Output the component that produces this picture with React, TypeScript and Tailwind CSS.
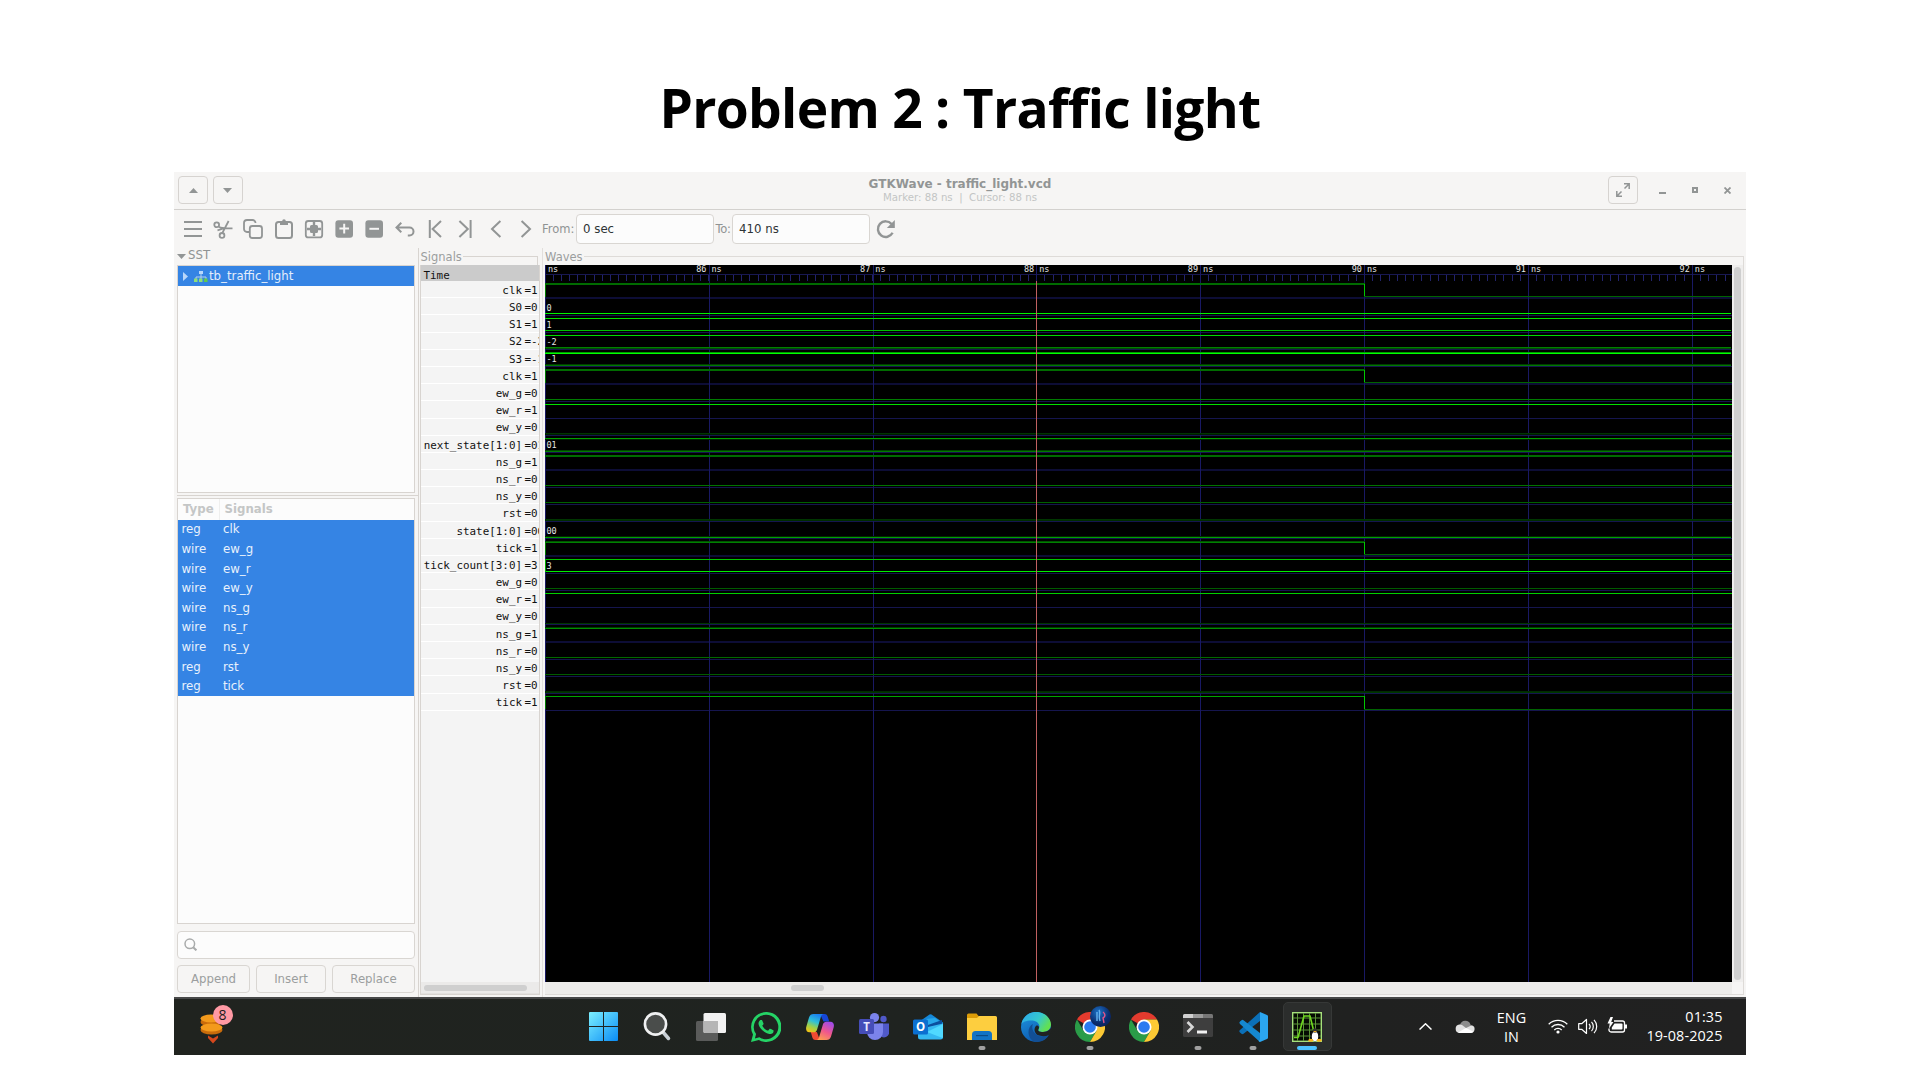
import React from "react";

const GREY = "#929595";

type Row = {
  name: string;
  value: string;
  bus?: string;
  lines: [number, string][];
  blue: number[];
  fall?: [number, number];
};

// Line positions are rows of pixels counted from the top of the window's screen area.
const rows: Row[] = [
  { name: "clk", value: "1", lines: [[283, "#006b00"], [284, "#006b00"]], blue: [297, 298], fall: [284, 296] },
  { name: "S0", value: "0", bus: "0", lines: [[313, "#00f000"]], blue: [315] },
  { name: "S1", value: "1", bus: "1", lines: [[318, "#00e000"], [330, "#00c400"]], blue: [332] },
  { name: "S2", value: "-2", bus: "-2", lines: [[335, "#00dc00"], [347, "#008000"], [348, "#004c00"]], blue: [349] },
  { name: "S3", value: "-1", bus: "-1", lines: [[352, "#009c00"], [353, "#00ff00"], [364, "#003c00"], [365, "#007800"]], blue: [366] },
  { name: "clk", value: "1", lines: [[369, "#006b00"], [370, "#006b00"]], blue: [383, 384], fall: [370, 382] },
  { name: "ew_g", value: "0", lines: [[399, "#007c00"]], blue: [401] },
  { name: "ew_r", value: "1", lines: [[404, "#00e000"]], blue: [418] },
  { name: "ew_y", value: "0", lines: [[433, "#003600"], [434, "#001c00"]], blue: [435] },
  { name: "next_state[1:0]", value: "01", bus: "01", lines: [[438, "#00a000"], [439, "#002000"], [450, "#004400"], [451, "#007c00"]], blue: [452] },
  { name: "ns_g", value: "1", lines: [[455, "#006b00"], [456, "#006b00"]], blue: [469, 470] },
  { name: "ns_r", value: "0", lines: [[485, "#007400"]], blue: [487] },
  { name: "ns_y", value: "0", lines: [[502, "#006000"]], blue: [504] },
  { name: "rst", value: "0", lines: [[519, "#003600"], [520, "#002c00"]], blue: [521] },
  { name: "state[1:0]", value: "00", bus: "00", lines: [[536, "#002800"], [537, "#00a000"]], blue: [538] },
  { name: "tick", value: "1", lines: [[541, "#005400"], [542, "#008000"]], blue: [555, 556], fall: [542, 554] },
  { name: "tick_count[3:0]", value: "3", bus: "3", lines: [[559, "#00c400"], [571, "#00ec00"]], blue: [573] },
  { name: "ew_g", value: "0", lines: [[588, "#005a00"]], blue: [590] },
  { name: "ew_r", value: "1", lines: [[593, "#00d000"]], blue: [607] },
  { name: "ew_y", value: "0", lines: [[623, "#003600"]], blue: [624] },
  { name: "ns_g", value: "1", lines: [[627, "#003c00"], [628, "#009000"]], blue: [641, 642] },
  { name: "ns_r", value: "0", lines: [[657, "#006a00"]], blue: [659] },
  { name: "ns_y", value: "0", lines: [[674, "#005a00"]], blue: [676] },
  { name: "rst", value: "0", lines: [[691, "#002c00"], [692, "#003600"]], blue: [693] },
  { name: "tick", value: "1", lines: [[696, "#00a400"]], blue: [710], fall: [696, 709] },
];

const vars: [string, string][] = [
  ["reg", "clk"], ["wire", "ew_g"], ["wire", "ew_r"], ["wire", "ew_y"], ["wire", "ns_g"],
  ["wire", "ns_r"], ["wire", "ns_y"], ["reg", "rst"], ["reg", "tick"],
];

const PITCH = 163.9;

function Waves() {
  const Y0 = 265;
  const edge = 819;
  const ticks = Array.from({ length: 145 }, (_, i) => i);
  return (
    <svg width="1187" height="717" viewBox="0 0 1187 717" className="block bg-black" shapeRendering="crispEdges">
      {rows.map((r, i) => r.blue.map((y) => (
        <rect key={i + "b" + y} x="0" y={y - Y0} width="1187" height="1" fill={r.blue.length > 1 ? "#0d0d36" : "#15154e"} />
      )))}
      <rect x="0" y="9" width="1187" height="1" fill="#181852" />
      {ticks.map((i) => (
        <rect key={i} x={Math.floor((i * PITCH) / 20)} y="10" width="1" height="6" fill="#22226c" />
      ))}
      {[0, 1, 2, 3, 4, 5, 6, 7].map((i) => (
        <rect key={i} x={Math.floor(i * PITCH + 0.2)} y="0" width="1" height="717" fill="#191964" />
      ))}
      {rows.map((r, i) =>
        r.lines.map(([y, c]) => (
          <rect key={i + "l" + y} x="0" y={y - Y0} width={r.fall ? edge + 1 : r.bus ? 1186 : 1187} height="1" fill={c} />
        ))
      )}
      {rows.map((r, i) =>
        r.fall ? (
          <g key={i}>
            <rect x={edge} y={r.fall[0] - Y0} width="1" height={r.fall[1] - r.fall[0] + 1} fill="#00c800" />
            <rect x={edge} y={r.fall[1] - Y0} width={1187 - edge} height="1" fill="#006400" />
            <rect x="0" y={r.fall[0] - Y0} width="1" height="13" fill="#007c00" />
          </g>
        ) : null
      )}
      <rect x="0" y="294" width="1" height="13" fill="#00b000" />
      <rect x="491" y="16" width="1" height="701" fill="#c06060" />
      <g fill="#e6e6e6" fontFamily="'DejaVu Sans Mono', monospace" fontSize="8.5">
        <text x="3" y="7">ns</text>
        {[86, 87, 88, 89, 90, 91, 92].map((n, i) => (
          <g key={n}>
            <text x={(i + 1) * PITCH - 2.5} y="7" textAnchor="end">{n}</text>
            <text x={(i + 1) * PITCH + 2.5} y="7">ns</text>
          </g>
        ))}
        {rows.map((r, i) =>
          r.bus ? <text key={i} x="1.5" y={28.4 + i * 17.2}>{r.bus}</text> : null
        )}
      </g>
    </svg>
  );
}

function Tool({ children, w = 20 }: { children: React.ReactNode; w?: number }) {
  return (
    <div className="flex w-[30.3px] shrink-0 justify-center">
      <svg width={w} height="20" viewBox="0 0 20 20" fill="none" stroke={GREY} strokeWidth="1.8">{children}</svg>
    </div>
  );
}

function HeaderButton({ children }: { children: React.ReactNode }) {
  return (
    <div className="flex h-7 w-[30px] items-center justify-center rounded-[4px] border border-[#d6d3d0]">{children}</div>
  );
}

function Entry({ children }: { children: React.ReactNode }) {
  return (
    <div className="flex h-[30px] w-[137.500px] items-center rounded-[4px] border border-[#d9d6d2] bg-[#fcfcfc] pt-[1px] pl-[6px] text-[11.750px] text-[#2e3436]">{children}</div>
  );
}

function Toolbar() {
  return (
    <div className="flex h-[38px] items-center pl-[3.5px]">
      <Tool><path d="M1 3h18M1 10h18M1 17h18" strokeWidth="2" /></Tool>
      <Tool><circle cx="3.7" cy="5.800" r="2.400" /><circle cx="9" cy="16.400" r="2.400" /><path d="M6 7.800C9 10 14 9.400 19.500 9.300M9.400 13.800 15.600 2M4.500 11.300 12 9" /></Tool>
      <Tool><path d="M6.5 13H4a3 3 0 0 1-3-3V4a3 3 0 0 1 3-3h5.5a3 3 0 0 1 3 3" /><rect x="6.8" y="7" width="12.2" height="12" rx="2.5" /></Tool>
      <Tool><rect x="2" y="3" width="16" height="16" rx="2.5" strokeWidth="2" /><path d="M6 2h2.2a1.8 1.8 0 0 1 3.6 0H14v4H6z" fill={GREY} stroke="none" /></Tool>
      <Tool><rect x="1.800" y="2" width="16.400" height="16.400" rx="2.500" /><path d="M7.500 6h5a1.500 1.500 0 0 1 1.500 1.500v5a1.500 1.500 0 0 1-1.500 1.500h-5A1.500 1.500 0 0 1 6 12.500v-5A1.500 1.500 0 0 1 7.500 6zM8.800 3h2.400v14H8.800zM3 8.800h14v2.400H3z" fill={GREY} stroke="none" /></Tool>
      <Tool><rect x="1.400" y="1.2" width="17.6" height="17.6" rx="3" fill={GREY} stroke="none" /><path d="M10.200 4.8v9.6M5.400 9.6h9.6" stroke="#f6f5f4" strokeWidth="2" /></Tool>
      <Tool><rect x="1.400" y="1.2" width="17.6" height="17.6" rx="3" fill={GREY} stroke="none" /><path d="M5.400 9.8h9.6" stroke="#f6f5f4" strokeWidth="2" /></Tool>
      <Tool><path d="M6.300 3.800 1.500 8.500l4.800 4.700M1.800 8.500h12.700a4 4 0 0 1 4 4a4 4 0 0 1-4 4h-1.700" strokeWidth="2" /></Tool>
      <Tool><path d="M4.8 1v18M16 2 7.6 10 16 18" strokeWidth="2" /></Tool>
      <Tool><path d="M15.6 1v18M4.4 2l8.4 8-8.4 8" strokeWidth="2" /></Tool>
      <Tool><path d="M14.4 2 6 10l8.4 8" strokeWidth="2" /></Tool>
      <Tool><path d="M5.6 2 14 10l-8.4 8" strokeWidth="2" /></Tool>
      <div className="flex items-center text-[11.5px] text-[#8f9393]">
        <span className="mt-[1px] ml-[1px] w-[34px]">From:</span>
        <Entry>0 sec</Entry>
        <span className="mt-[1px] ml-[2px] w-[16.500px] tracking-[-0.3px]">To:</span>
        <Entry>410 ns</Entry>
      </div>
      <svg className="ml-[6.500px]" width="20" height="20" viewBox="0 0 20 20" fill="none" stroke={GREY} strokeWidth="2.4">
        <path d="M16.6 13.8A7.8 7.8 0 1 1 15.6 5" /><path d="M18.8 1v8h-8z" fill={GREY} stroke="none" />
      </svg>
    </div>
  );
}

function Sidebar() {
  return (
    <div className="flex w-[244px] flex-col pl-[3px] text-[11.75px]">
      <div className="flex h-[17px] items-center text-[#8f9393]">
        <svg width="9" height="5" viewBox="0 0 9 5"><path d="M0 0h9L4.5 5z" fill={GREY} /></svg>
        <span className="ml-[2px] -mt-[1px]">SST</span>
      </div>
      <div className="h-[228px] w-[238px] border border-[#d8d4d0] bg-[#fcfcfc]">
        <div className="flex h-5 items-center bg-[#3584e4] pt-[1px] text-[#e4eefb]">
          <svg className="ml-[5px]" width="5" height="9" viewBox="0 0 5 9"><path d="M0 0v9l5-4.500z" fill="#b8d6fa" /></svg>
          <svg className="ml-[6px]" width="14" height="11" viewBox="0 0 14 11">
            <path d="M7 3v3M2 8V6h10v2M7 6v2" stroke="#b4d0f0" fill="none" />
            <rect x="5" y="0" width="4" height="3" fill="#b9d8fb" /><rect x="0" y="7.500" width="3.500" height="3.500" fill="#8de07a" /><rect x="5" y="7.500" width="3.500" height="3.500" fill="#8de07a" /><rect x="10" y="7.500" width="3.500" height="3.500" fill="#5fc94f" />
          </svg>
          <span className="ml-[1px]">tb_traffic_light</span>
        </div>
      </div>
      <div className="mt-[2px] mb-[2px] h-px w-[241px] bg-[#d8d4d0]" />
      <div className="h-[426px] w-[238px] border border-[#d8d4d0] bg-[#fcfcfc]">
        <div className="flex h-[21px] items-center font-bold text-[#c4c6c6]">
          <span className="flex h-full w-[42px] items-center border-r border-[#efefee] pl-[5px]">Type</span>
          <span className="pl-[4.500px]">Signals</span>
        </div>
        <div className="bg-[#3584e4] text-[#e8f1fc]">
          {vars.map(([t, n]) => (
            <div key={n} className="flex h-[19.600px] items-center pt-[1px] pl-[3.500px]">
              <span className="w-[41.500px]">{t}</span><span>{n}</span>
            </div>
          ))}
        </div>
      </div>
      <div className="mt-[6.500px] flex h-7 w-[238px] items-center rounded-[4px] border border-[#d9d6d2] bg-[#fcfcfc] pl-[6px]">
        <svg width="13" height="13" viewBox="0 0 13 13" fill="none" stroke="#a9abab" strokeWidth="1.500"><circle cx="5.800" cy="5.800" r="4.800" /><path d="m9.200 9.200 3.200 3.200" strokeWidth="2" /></svg>
      </div>
      <div className="mt-[6px] flex w-[238px] justify-between text-[#9b9e9e]">
        <div className="flex h-7 w-[73px] items-center justify-center rounded-[4px] border border-[#d9d6d2] pt-[2px]">Append</div>
        <div className="flex h-7 w-[70px] items-center justify-center rounded-[4px] border border-[#d9d6d2] pt-[2px]">Insert</div>
        <div className="flex h-7 w-[83px] items-center justify-center rounded-[4px] border border-[#d9d6d2] pt-[2px]">Replace</div>
      </div>
    </div>
  );
}

function SignalNames() {
  return (
    <div className="flex w-[124px] flex-col border-l border-[#d8d4d0]">
      <div className="flex h-[17px] items-center pl-[1.500px] text-[11.500px] text-[#9b9e9e]">
        <span className="mt-[2px]">Signals</span>
        <div className="ml-[1px] h-[9px] w-[75.500px] self-end border-t border-r border-[#d8d4d0]" />
      </div>
      <div className="ml-[1px] h-[730px] w-[120px] border-x border-b border-[#d8d4d0] bg-[#f4f4f4] font-['DejaVu_Sans_Mono',monospace] text-[10.900px] text-[#111]">
        <div className="flex h-4 items-center bg-[#cbcbcb] pt-[6px] pl-[2.500px]">Time</div>
        <div className="h-[701px] overflow-hidden">
          {rows.map((r, i) => (
            <div key={i} className="flex h-[17.200px] items-center justify-end overflow-hidden border-b border-white pt-[4px] whitespace-nowrap">
              <span>{r.name}</span>
              <span className="w-[17px] shrink-0 overflow-hidden pl-[2.500px]">={r.value}</span>
            </div>
          ))}
        </div>
        <div className="h-3 border-b border-[#e2e0de] bg-[#ebeae9] pt-[3px] pl-[3px]"><div className="h-[6px] w-[103px] rounded-full bg-[#cfcfcf]" /></div>
      </div>
    </div>
  );
}

function WavePanel() {
  return (
    <div className="flex flex-1 flex-col border-l border-[#e2dfdc] pl-[2px]">
      <div className="flex h-[17px] items-center text-[11.500px] text-[#9b9e9e]">
        <span className="mt-[2px]">Waves</span>
        <div className="mr-[2px] ml-[1px] h-[9px] flex-1 self-end border-t border-r border-[#dedbd8]" />
      </div>
      <div className="mr-[2px] grid grid-cols-[1187px_1fr] border-r border-b border-[#dedbd8]">
        <Waves />
        <div className="bg-[#efeeed] px-[2px] pt-[2px]"><div className="h-[713px] w-[7px] rounded-full bg-[#cfcfcf]" /></div>
        <div className="h-3 bg-[#edecea] pt-[3px]"><div className="ml-[246px] h-[6px] w-[33px] rounded-full bg-[#cfcfcf]" /></div>
        <div />
      </div>
    </div>
  );
}

function ChromeLogo() {
  return (
    <svg width="30" height="30" viewBox="0 0 48 48">
      <path d="M24 24 3.200 12A24 24 0 0 1 44.800 12H24z" fill="#e33b2e" />
      <path d="M24 24 13.600 30 3.200 12a24 24 0 0 0 20.800 36l10.400-18z" fill="#2a9c48" />
      <path d="M24 12h20.800A24 24 0 0 1 24 48l10.400-18z" fill="#fcc934" />
      <circle cx="24" cy="24" r="12" fill="#fff" /><circle cx="24" cy="24" r="9.300" fill="#2b7bf0" />
    </svg>
  );
}

function Slot({ children, dot }: { children: React.ReactNode; dot?: boolean }) {
  return (
    <div className="relative flex h-[49px] w-[54.120px] items-center justify-center">
      {children}
      {dot && <div className="absolute bottom-[1px] left-1/2 h-[4px] w-[7px] -translate-x-1/2 rounded-full bg-[#a0a0a0]" />}
    </div>
  );
}

function Taskbar() {
  return (
    <div className="flex h-[58px] items-center border-t-2 border-[#474848] bg-[linear-gradient(90deg,#20231f,#1f2320_45%,#202120_75%,#212121)] pb-[1px] font-['Open_Sans',sans-serif] text-white">
      <div className="relative ml-[26px] h-[30px] w-[26px]">
        <svg width="26" height="32" viewBox="0 0 26 32">
          <ellipse cx="11" cy="10" rx="10.500" ry="4.500" fill="#c86a0a" /><ellipse cx="11" cy="6.500" rx="10.500" ry="4" fill="#f39a1c" />
          <path d="M3 12c4 3 12 3 16 1v6H6z" fill="#b85c08" />
          <ellipse cx="11.500" cy="18" rx="11" ry="4.500" fill="#c96c0b" /><ellipse cx="11.500" cy="15.500" rx="11" ry="4" fill="#f39a1c" />
          <path d="m8 23.500 5 3 5-3V26l-5 5.500L8 26z" fill="#d5481d" />
        </svg>
        <div className="absolute -top-[7px] left-[12.500px] flex size-5 items-center justify-center rounded-full bg-[#ff99a4] text-[14px] text-[#1c1c1c]">8</div>
      </div>
      <div className="ml-[350.200px] flex">
        <Slot>
          <svg width="29" height="29" viewBox="0 0 29 29">
            <defs><linearGradient id="win" x1="0" y1="0" x2="1" y2="1"><stop stopColor="#7cf0ff" /><stop offset="1" stopColor="#0a8cf5" /></linearGradient></defs>
            <path d="M1 0h13v14H0V1a1 1 0 0 1 1-1zM15 0h13a1 1 0 0 1 1 1v13H15zM0 15h14v14H1a1 1 0 0 1-1-1zM15 15h14v13a1 1 0 0 1-1 1H15z" fill="url(#win)" />
          </svg>
        </Slot>
        <Slot>
          <svg width="28" height="29" viewBox="0 0 28 29"><path d="m19.500 19.500 6 7" stroke="#c9d0d6" strokeWidth="3.500" strokeLinecap="round" /><circle cx="12.500" cy="12" r="10.600" fill="#4a4d4b" stroke="#f0f1f2" strokeWidth="2.600" /></svg>
        </Slot>
        <Slot>
          <svg width="30" height="28" viewBox="0 0 30 28"><rect x="0" y="8" width="22" height="20" rx="1.500" fill="#5a5b5a" /><rect x="7.500" y="0" width="22.500" height="20" rx="1.500" fill="#f2f2f2" /><path d="M7.500 8H22v12H9a1.500 1.500 0 0 1-1.500-1.500z" fill="#b5b5b5" /></svg>
        </Slot>
        <Slot>
          <svg width="30" height="30" viewBox="0 0 24 24" fill="#25d366"><path d="M17.472 14.382c-.297-.149-1.758-.867-2.030-.967-.273-.099-.471-.148-.670.150-.197.297-.767.966-.940 1.164-.173.199-.347.223-.644.075-.297-.150-1.255-.463-2.390-1.475-.883-.788-1.480-1.761-1.653-2.059-.173-.297-.018-.458.130-.606.134-.133.298-.347.446-.520.149-.174.198-.298.298-.497.099-.198.050-.371-.025-.520-.075-.149-.669-1.612-.916-2.207-.242-.579-.487-.500-.669-.510-.173-.008-.371-.010-.570-.010-.198 0-.520.074-.792.372-.272.297-1.040 1.016-1.040 2.479 0 1.462 1.065 2.875 1.213 3.074.149.198 2.096 3.200 5.077 4.487.709.306 1.262.489 1.694.625.712.227 1.360.195 1.871.118.571-.085 1.758-.719 2.006-1.413.248-.694.248-1.289.173-1.413-.074-.124-.272-.198-.570-.347z" /><path fillRule="evenodd" d="M12 0A12 12 0 0 0 1.600 17.900L0 24l6.300-1.650A12 12 0 1 0 12 0zM12 2.200a9.800 9.800 0 1 1-5.300 18l-3.600.95.960-3.500A9.800 9.800 0 0 1 12 2.200z" /></svg>
        </Slot>
        <Slot>
          <svg width="28" height="26" viewBox="0 0 28 26">
            <defs>
              <linearGradient id="cpa" x1="0.600" y1="0" x2="0.200" y2="1"><stop stopColor="#1a7ff0" /><stop offset="0.400" stopColor="#2fc0d8" /><stop offset="0.700" stopColor="#9fd04a" /><stop offset="1" stopColor="#f5c412" /></linearGradient>
              <linearGradient id="cpb" x1="0.700" y1="0" x2="0.200" y2="1"><stop stopColor="#a14be8" /><stop offset="0.500" stopColor="#f0578c" /><stop offset="1" stopColor="#fda14e" /></linearGradient>
            </defs>
            <path d="M14 0h4.500c2 0 2.700 1.200 3.300 3l1.400 4.500h-5.700z" fill="#1646d8" />
            <path d="M14 26H9.500c-2 0-2.700-1.200-3.300-3L4.800 18h6z" fill="#ee4b32" />
            <path d="M7.500 0H18c-2 0-2.700 1.500-3.300 3.500l-3.600 12c-.6 2-1.700 2.800-3.600 2.800H3.500C.5 18.300-.4 15.500.3 12.800L3 3.500C3.800 1 5.200 0 7.500 0z" fill="url(#cpa)" />
            <path d="M20.500 26H10c2 0 2.700-1.500 3.300-3.500l3.600-12c.6-2 1.700-2.800 3.600-2.800h4c3 0 3.900 2.800 3.200 5.500L25 22.500c-.8 2.500-2.200 3.500-4.500 3.500z" fill="url(#cpb)" />
          </svg>
        </Slot>
        <Slot>
          <svg width="30" height="28" viewBox="0 0 30 28">
            <circle cx="24.500" cy="6" r="3.200" fill="#5059c9" /><path d="M20 10.500h10V17a5 5 0 0 1-10 4z" fill="#5059c9" />
            <circle cx="15.500" cy="4.600" r="4.600" fill="#7b83eb" /><path d="M8 10.500h16V19a8 8 0 0 1-16 0z" fill="#7b83eb" />
            <rect x="0" y="6" width="15" height="15" rx="1.500" fill="#454db8" />
            <text x="7.500" y="17.500" fontSize="11.500" fontWeight="700" fill="#e8e9ff" textAnchor="middle">T</text>
          </svg>
        </Slot>
        <Slot>
          <svg width="30" height="26" viewBox="0 0 30 26">
            <path d="M5 8.500 16.500.500a2 2 0 0 1 2 0L30 8.500v6H5z" fill="#1588d8" /><path d="m13 5 9-1 7 5-15 9z" fill="#28a8ea" /><path d="M12 12 29 6v5l-14 8z" fill="#0b4f9e" />
            <path d="M5 13h10l15-3.500V23a2.500 2.500 0 0 1-2.500 2.500h-20A2.500 2.500 0 0 1 5 23z" fill="#35b8f1" /><path d="m14 18 16-8v13l-.5 1z" fill="#50d9ff" />
            <rect x="0" y="5.500" width="15" height="15" rx="1.500" fill="#0b6fd0" />
            <text x="7.500" y="17" fontSize="11.500" fontWeight="700" fill="#fff" textAnchor="middle">O</text>
          </svg>
        </Slot>
        <Slot dot>
          <svg width="30" height="28" viewBox="0 0 30 28">
            <path d="M0 2a1.500 1.500 0 0 1 1.500-1.500H9.500L12 3.500V9H0z" fill="#dc9c07" /><path d="M0 5h10l2-2h16.500A1.500 1.500 0 0 1 30 4.500V27H0z" fill="#fdce3f" />
            <path d="M5 27v-5.500A3.500 3.500 0 0 1 8.500 18h13a3.500 3.500 0 0 1 3.500 3.500V27z" fill="#1273c4" /><rect x="9" y="22" width="12" height="1.200" fill="#0b4a85" />
          </svg>
        </Slot>
        <Slot>
          <svg width="30" height="30" viewBox="0 0 30 30">
            <defs>
              <linearGradient id="ega" x1="0" y1="0" x2="1" y2="0.500"><stop stopColor="#2ba6ee" /><stop offset="0.600" stopColor="#35c8cf" /><stop offset="1" stopColor="#62e052" /></linearGradient>
              <linearGradient id="egb" x1="0" y1="0" x2="0.500" y2="1"><stop stopColor="#1f97e2" /><stop offset="1" stopColor="#0c5ab0" /></linearGradient>
            </defs>
            <circle cx="15" cy="15" r="15" fill="url(#egb)" />
            <path d="M.3 12C2 4.500 8 0 15 0c9 0 15 6.500 15 12.500 0 4.500-3.500 7.500-8 7.500-4 0-5.500-1.500-4.500-2.800C20 13.500 17 9 11.500 8.500 6 8 1.500 10 .3 12z" fill="url(#ega)" />
            <path d="M12 12c-2 4 0 9 4.500 11.500 4 2 8.500 1 11.500-.5-3 5-8 7.500-14 7C6 27 5.500 15 12 12z" fill="#124f94" />
            <path d="M17.500 17.200C16.500 18.500 18 20 22 20c4.500 0 8-3 8-5v5c-1 1.500-1.500 2.500-2.500 3.200-3 1.300-7.500 1.300-11-.2-3.500-2.500-4-7-1-9.500 2.500 0 3 2 2 3.700z" fill="#202322" />
          </svg>
        </Slot>
        <Slot dot>
          <ChromeLogo />
          <div className="absolute top-[4px] left-[27px] flex size-[21px] items-center justify-center rounded-full bg-[radial-gradient(circle_at_40%_30%,#1d74c8,#0a2c6e_55%,#0a1b4c)]">
            <svg width="12" height="15" viewBox="0 0 12 15" fill="none" strokeWidth="1.400"><path d="M2 3v9M4 1c2 3-1 6 1 11" stroke="#67b4f0" /><path d="M8 3c3 2 2 5 0 6l1 5" stroke="#e0558c" /></svg>
          </div>
        </Slot>
        <Slot><ChromeLogo /></Slot>
        <Slot dot>
          <svg className="-mt-[2px]" width="30" height="23" viewBox="0 0 30 23">
            <rect width="30" height="23" rx="1.500" fill="#3e3e3e" /><path d="M1.500 0H10v4H0V1.500A1.500 1.500 0 0 1 1.500 0z" fill="#d0d0d0" /><path d="M10 0h10v4H10z" fill="#9a9a9a" /><path d="M20 0h8.500A1.500 1.500 0 0 1 30 1.500V4H20z" fill="#767676" />
            <path d="m4.500 8 5 5-5 5" stroke="#d8d8d8" strokeWidth="2.600" fill="none" /><rect x="14" y="16.500" width="10" height="3" fill="#f2f2f2" />
          </svg>
        </Slot>
        <Slot dot>
          <svg width="30" height="30" viewBox="0 0 30 30">
            <path d="m22 0-20 18a1.600 1.600 0 0 0 0 2.400l1.500 1.300a1.600 1.600 0 0 0 2 .1L22 9z" fill="#0b70b8" />
            <path d="m22 30-20-18a1.600 1.600 0 0 1 0-2.400L3.500 8.300a1.600 1.600 0 0 1 2-.1L22 21z" fill="#1588d0" />
            <path d="M22 0l7 3a1.500 1.500 0 0 1 1 1.500v21a1.500 1.500 0 0 1-1 1.500l-7 3-1.500-1 1.500-1.500V2z" fill="#2ba6f0" />
          </svg>
        </Slot>
        <div className="relative ml-[3px] flex size-[49px] items-center justify-center rounded-[5px] border border-[#363837] bg-[#2b2d2c]">
          <svg width="30" height="30" viewBox="0 0 30 30">
            <rect x="0.700" y="0.700" width="28.600" height="28.600" fill="#050a02" stroke="#a6e07c" strokeWidth="1.400" />
            <path d="M5.500 1v28M11.500 1v28M17.500 1v28M23.500 1v28M1 6h28M1 12h28M1 18h28M1 24h28" stroke="#5c9438" strokeWidth="1" />
            <path d="M2 25.500h4L12 4h6l4.500 18" stroke="#6fd820" strokeWidth="1.600" fill="none" />
            <ellipse cx="23" cy="23.500" rx="4.500" ry="6" fill="#111" /><ellipse cx="23" cy="24.500" rx="3.200" ry="4.800" fill="#fff" /><circle cx="23" cy="18.500" r="2.200" fill="#333" /><path d="m21 19 2 1.500 2-1.500z" fill="#f5b31a" />
            <ellipse cx="18.800" cy="28.200" rx="2.600" ry="1.500" fill="#f5b31a" /><ellipse cx="27.200" cy="28.200" rx="2.600" ry="1.500" fill="#f5b31a" />
          </svg>
          <div className="absolute bottom-0 h-[4px] w-5 rounded-full bg-[#4cc2ff]" />
        </div>
      </div>
      <div className="mr-[23.500px] ml-auto flex items-center text-[14.400px] leading-[19px]">
        <svg width="13" height="7" viewBox="0 0 13 7" fill="none" stroke="#fff" strokeWidth="1.500"><path d="M.5 6.500 6.500.800l6 5.700" /></svg>
        <svg className="ml-[23px]" width="20" height="13" viewBox="0 0 20 13">
          <path d="M5 5a5.500 5.500 0 0 1 10.500-.5L18 10H4z" fill="#8c8c8c" /><path d="M4.300 4.500a4.300 4.300 0 0 0 0 8.500h11.500a4 4 0 0 0 1-7.800L11 8 7 5a4 4 0 0 0-2.700-.5z" fill="#e2e2e2" /><path d="M3 12.600 11 8l7.500 3.800a4 4 0 0 1-2.700 1.200H4.300z" fill="#fff" />
        </svg>
        <div className="ml-[22px] w-[30px] text-center">ENG<br />IN</div>
        <svg className="ml-[21px]" width="20" height="15" viewBox="0 0 20 15" fill="none" stroke="#fff" strokeWidth="1.300">
          <path d="M.7 5.300a13.200 13.200 0 0 1 18.600 0M3.500 8.200a9.200 9.200 0 0 1 13 0M6.300 11a5.200 5.200 0 0 1 7.400 0" /><circle cx="10" cy="13" r="1.600" fill="#fff" stroke="none" />
        </svg>
        <svg className="ml-[10px]" width="20" height="17" viewBox="0 0 20 17" fill="none" stroke="#fff" strokeWidth="1.200" strokeLinejoin="round">
          <path d="M.7 5.700h3L8.500 1.500v14L3.700 11.300h-3zM11 5.800c1.300 1.500 1.300 3.900 0 5.400M13.500 3.800c2.400 2.600 2.400 6.800 0 9.400M16 1.800c3.600 3.700 3.600 9.700 0 13.400" />
        </svg>
        <svg className="ml-[9px] -mt-[2px]" width="20" height="17" viewBox="0 0 20 17" fill="none" stroke="#fff" strokeWidth="1.300">
          <path d="M7 4h8.500a2 2 0 0 1 2 2v7a2 2 0 0 1-2 2H4a2 2 0 0 1-2-2v-1.500" /><rect x="18" y="7.500" width="2" height="4" fill="#fff" stroke="none" /><path d="M7.500 6.500h7a1 1 0 0 1 1 1v4a1 1 0 0 1-1 1H4.800v-2z" fill="#fff" stroke="none" /><path d="M3.500 0 .5 6.500h2.200L2 11.500 6.500 5H4.200L6 0z" fill="#fff" stroke="none" />
        </svg>
        <div className="ml-[18px] w-[78px] pb-[2px] text-right tracking-[0.1px]">01:35<br />19-08-2025</div>
      </div>
    </div>
  );
}

export default function App() {
  return (
    <div className="h-[1080px] w-[1920px] overflow-hidden bg-white font-['DejaVu_Sans',sans-serif]">
      <h1 className="flex h-[172px] items-center justify-center pt-[43px] font-['Open_Sans',sans-serif] text-[53.300px] font-bold tracking-[-0.700px] whitespace-nowrap text-black">Problem 2 : Traffic light</h1>
      <div className="ml-[174px] flex h-[883px] w-[1572px] flex-col bg-[#f6f5f4]">
        <div className="relative flex h-[38px] items-center border-b border-[#d3d1ce] pb-px pl-[4px]">
          <HeaderButton><svg width="9" height="5" viewBox="0 0 9 5"><path d="M0 5h9L4.500 0z" fill={GREY} /></svg></HeaderButton>
          <div className="ml-[4.500px]"><HeaderButton><svg width="9" height="5" viewBox="0 0 9 5"><path d="M0 0h9L4.500 5z" fill={GREY} /></svg></HeaderButton></div>
          <div className="absolute inset-x-0 top-[4.500px] text-center">
            <div className="text-[12px] leading-[15px] font-bold text-[#929595]">GTKWave - traffic_light.vcd</div>
            <div className="text-[10.200px] leading-[12px] whitespace-pre text-[#c3c5c5]">Marker: 88 ns  |  Cursor: 88 ns</div>
          </div>
          <div className="mr-[15.500px] ml-auto flex items-center">
            <HeaderButton>
              <svg width="14" height="14" viewBox="0 0 14 14" fill="none" stroke={GREY} strokeWidth="1.500"><path d="M8 .8h5.200V6M13 1 8.500 5.500M6 13.200H.8V8M1 13l4.500-4.500" /></svg>
            </HeaderButton>
            <div className="mt-[5px] ml-[21px] h-[2px] w-[7px] bg-[#929595]" />
            <div className="ml-[26px] size-[6px] border-2 border-[#929595]" />
            <svg className="ml-[26px]" width="7" height="7" viewBox="0 0 7 7" stroke={GREY} strokeWidth="1.800"><path d="m.5.5 6 6M6.500.5l-6 6" /></svg>
          </div>
        </div>
        <Toolbar />
        <div className="flex h-[749px] bg-[#f6f5f4]">
          <Sidebar />
          <SignalNames />
          <WavePanel />
        </div>
        <Taskbar />
      </div>
    </div>
  );
}
